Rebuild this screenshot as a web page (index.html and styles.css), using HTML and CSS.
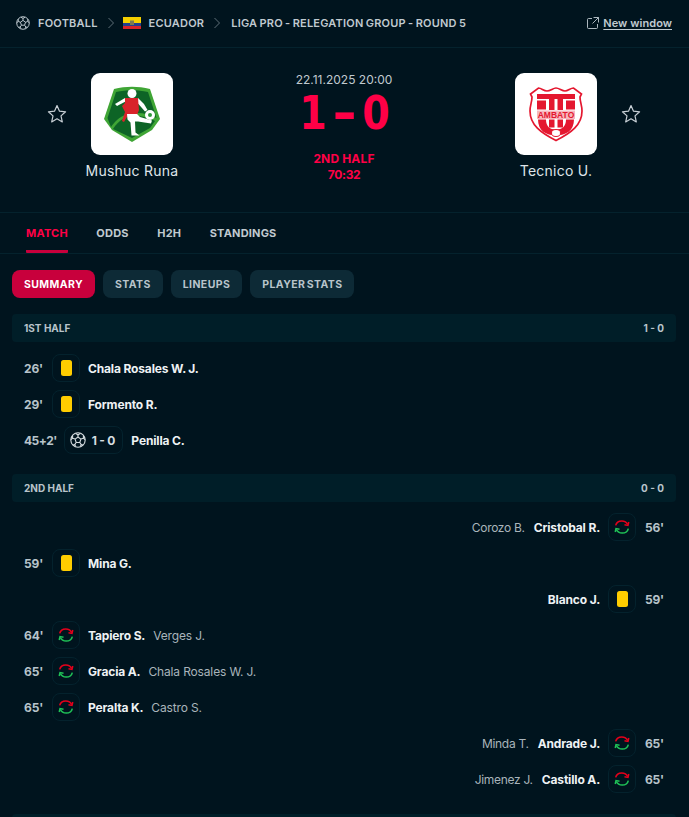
FILE: index.html
```html
<!DOCTYPE html>
<html lang="en">
<head>
<meta charset="utf-8">
<title>Mushuc Runa - Tecnico U.</title>
<link rel="stylesheet" href="styles.css">
</head>
<body>
<svg class="defs" width="0" height="0" aria-hidden="true">
  <defs>
    <symbol id="ball" viewBox="0 0 16 16">
      <g fill="none" stroke="currentColor" stroke-width="1.100">
        <circle cx="8" cy="8" r="7.200"/>
        <path d="M8 5l2.900 2.100-1.100 3.400H6.200L5.100 7.100zM8 5V2.800M10.900 7.100l2.500-.8M9.800 10.500l1.500 2.100M6.200 10.500l-1.500 2.100M5.100 7.100l-2.500-.8"/>
        <path d="M5.600 1.400L8 2.800l2.400-1.400M13.400 3.600v2.700l1.700 1.400M2.600 3.600v2.700L.9 7.700M2.900 13l1.800-.4 1 2M13.100 13l-1.800-.4-1 2"/>
      </g>
    </symbol>
    <symbol id="star" viewBox="0 0 20 20">
      <path d="M10 1.600l2.500 5.600 6.100.6-4.600 4.100 1.300 6-5.300-3.100-5.300 3.100 1.300-6L1.400 7.800l6.100-.6z" fill="none" stroke="currentColor" stroke-width="1.200" stroke-linejoin="round"/>
    </symbol>
    <symbol id="chev" viewBox="0 0 8 12">
      <path d="M1.500 1l5 5-5 5" fill="none" stroke="currentColor" stroke-width="1"/>
    </symbol>
    <symbol id="sub" viewBox="0 0 16 16">
      <g fill="none" stroke-width="1.400">
        <path d="M2.400 6.600C3 4 5.200 2.600 7.800 2.600c2.300 0 4.300 1.200 5.200 3.200" stroke="#e4001b"/>
        <path d="M10.200 6l3.100.6.700-3" stroke="#e4001b"/>
        <path d="M13.600 9.400C13 12 10.800 13.400 8.200 13.400c-2.300 0-4.300-1.200-5.200-3.200" stroke="#1fc157"/>
        <path d="M5.800 10l-3.100-.6-.7 3" stroke="#1fc157"/>
      </g>
    </symbol>
  </defs>
</svg>

<header class="crumbs">
  <svg class="crumb-ball"><use href="#ball"/></svg>
  <span class="crumb">FOOTBALL</span>
  <svg class="chev"><use href="#chev"/></svg>
  <svg class="flag" viewBox="0 0 18 12">
    <rect width="18" height="6" fill="#f5d000"/>
    <rect y="6" width="18" height="3" fill="#24408e"/>
    <rect y="9" width="18" height="3" fill="#d8232a"/>
    <rect x="7" y="3.500" width="4" height="4.500" fill="#7d7a52"/>
  </svg>
  <span class="crumb">ECUADOR</span>
  <svg class="chev"><use href="#chev"/></svg>
  <span class="crumb">LIGA PRO - RELEGATION GROUP - ROUND 5</span>
  <a class="new-window">
    <svg class="nw-icon" viewBox="0 0 12 12"><path d="M5 1.500H1.500a1 1 0 0 0-1 1v8a1 1 0 0 0 1 1h8a1 1 0 0 0 1-1V7M6.500.5h5v5M11.500.5L5.500 6.500" fill="none" stroke="currentColor" stroke-width=".9"/></svg>
    <span class="nw-text">New window</span>
  </a>
</header>

<section class="match">
  <div class="side">
    <svg class="star"><use href="#star"/></svg>
    <div class="team">
      <div class="logo">
        <svg class="crest" viewBox="0 0 56 56">
          <path d="M10 3C22 0 34 0 46 3l10 30-8 11-20 12L8 44 0 33z" fill="#3fa535"/>
          <path d="M12 6C23 3.500 33 3.500 44 6l8.500 26C42 26 24 24 13 34c-3 3-5 5-6 7L3.500 32z" fill="#0d6426"/>
          <path d="M9 43c6-9 12-13 21-13s16 2 21 5l-5 7-18 10z" fill="#0d6426"/>
          <circle cx="28" cy="7.500" r="4.500" fill="#fff"/>
          <path d="M11 18l10-6 1.500 3-9.500 5z" fill="#fff"/>
          <path d="M34 12l6 6 3.500 6-2.500 1.500-7-8z" fill="#fff"/>
          <path d="M21 12h13l1 12-2 5H24l-4 7-2-1 3-9-3-6 3-3z" fill="#d8232a"/>
          <path d="M23 28h10l3 3 12 3.500-1 3-13-2-3 0 .5 11 4 3h-8l-1-13-3-3z" fill="#fff"/>
          <circle cx="46" cy="29" r="5" fill="#fff"/>
          <circle cx="46" cy="29" r="2" fill="#2d9a3a"/>
        </svg>
      </div>
      <div class="team-name">Mushuc Runa</div>
    </div>
  </div>
  <div class="result">
    <div class="kick">22.11.2025 20:00</div>
    <div class="score"><span class="digit">1</span><span class="dash">-</span><span class="digit">0</span></div>
    <div class="status">2ND HALF</div>
    <div class="status status-time">70:32</div>
  </div>
  <div class="side side-away">
    <div class="team">
      <div class="logo">
        <svg class="crest" viewBox="0 0 54 56">
          <path d="M27 54.500C12 47 1 39 1 25c0-6 2-9 2-14l-1.500-3 8-6c3 0 5 3 8.500 3S24 2 27 2s6 3 9 3 5.500-3 8.500-3l8 6-1.500 3c0 5 2 8 2 14 0 14-11 22-26 29.500z" fill="#fff" stroke="#e4172f" stroke-width="1.700"/>
          <path d="M8 8h38v5H8z" fill="#e4172f"/>
          <path d="M8 14.500h9v9H8zM37 14.500h9v9h-9zM20 13h5.500v11H20zM28.500 13H34v11h-5.500z" fill="#e4172f"/>
          <path d="M8 24.500h38V33H8z" fill="#f7b6bd"/>
          <path d="M9 33.500h8c0 7 4 10 10 10s10-3 10-10h8c0 11-8 16-18 16S9 44.500 9 33.500z" fill="#e4172f"/>
          <path d="M20 33.500h5.500v8H20zM28.500 33.500H34v8h-5.500z" fill="#e4172f"/>
          <text class="crest-text" x="27" y="31.500" text-anchor="middle">AMBATO</text>
          <ellipse cx="27" cy="47" rx="4.500" ry="3.500" fill="#fff" stroke="#e4172f" stroke-width="1"/>
        </svg>
      </div>
      <div class="team-name">Tecnico U.</div>
    </div>
    <svg class="star"><use href="#star"/></svg>
  </div>
</section>

<nav class="tabs">
  <a class="tab tab-active">MATCH</a>
  <a class="tab">ODDS</a>
  <a class="tab">H2H</a>
  <a class="tab">STANDINGS</a>
</nav>

<nav class="pills">
  <a class="pill pill-active">SUMMARY</a>
  <a class="pill">STATS</a>
  <a class="pill">LINEUPS</a>
  <a class="pill">PLAYER STATS</a>
</nav>

<main class="summary">
  <div class="period"><span>1ST HALF</span><span>1 - 0</span></div>
  <div class="events events-first">
    <div class="event"><span class="time">26'</span><span class="box"><i class="card"></i></span><b class="player">Chala Rosales W. J.</b></div>
    <div class="event"><span class="time">29'</span><span class="box"><i class="card"></i></span><b class="player">Formento R.</b></div>
    <div class="event"><span class="time time-wide">45+2'</span><span class="box box-goal"><svg class="goal-ball"><use href="#ball"/></svg><span class="goal-score">1 - 0</span></span><b class="player">Penilla C.</b></div>
  </div>
  <div class="period"><span>2ND HALF</span><span>0 - 0</span></div>
  <div class="events">
    <div class="event away"><span class="time">56'</span><span class="box"><svg class="sub"><use href="#sub"/></svg></span><b class="player">Cristobal R.</b><span class="off">Corozo B.</span></div>
    <div class="event"><span class="time">59'</span><span class="box"><i class="card"></i></span><b class="player">Mina G.</b></div>
    <div class="event away"><span class="time">59'</span><span class="box"><i class="card"></i></span><b class="player">Blanco J.</b></div>
    <div class="event"><span class="time">64'</span><span class="box"><svg class="sub"><use href="#sub"/></svg></span><b class="player">Tapiero S.</b><span class="off">Verges J.</span></div>
    <div class="event"><span class="time">65'</span><span class="box"><svg class="sub"><use href="#sub"/></svg></span><b class="player">Gracia A.</b><span class="off">Chala Rosales W. J.</span></div>
    <div class="event"><span class="time">65'</span><span class="box"><svg class="sub"><use href="#sub"/></svg></span><b class="player">Peralta K.</b><span class="off">Castro S.</span></div>
    <div class="event away"><span class="time">65'</span><span class="box"><svg class="sub"><use href="#sub"/></svg></span><b class="player">Andrade J.</b><span class="off">Minda T.</span></div>
    <div class="event away"><span class="time">65'</span><span class="box"><svg class="sub"><use href="#sub"/></svg></span><b class="player">Castillo A.</b><span class="off">Jimenez J.</span></div>
  </div>
  <div class="period"></div>
</main>
</body>
</html>
```
FILE: styles.css
```css
* { box-sizing: border-box; }
html, body { margin: 0; height: 100%; overflow: hidden; }
body {
  background: #00141e;
  color: #c8d0d6;
  font-family: Inter, "Liberation Sans", sans-serif;
  font-size: 12px;
}
.defs { position: absolute; }

.crumbs {
  display: flex;
  align-items: center;
  height: 48px;
  padding: 0 17px 2px 16px;
  border-bottom: 1px solid #04222d;
}
.crumb { font-size: 11px; font-weight: 600; letter-spacing: .2px; word-spacing: -.7px; color: #c0cad0; }
.crumb-ball { width: 14px; height: 14px; margin-right: 8px; color: #c0cad0; }
.chev { width: 8px; height: 12px; margin: 0 10px 0 9px; color: #5f6f78; }
.flag { width: 18px; height: 12px; margin: 0 8px 0 -2px; }
.new-window { margin-left: auto; display: flex; align-items: center; gap: 4px; color: #c0cad0; }
.nw-icon { width: 12px; height: 12px; }
.nw-text { font-size: 11px; font-weight: 600; text-decoration: underline; text-underline-offset: 2px; letter-spacing: .05px; }

.match {
  display: grid;
  grid-template-columns: 1fr 190px 1fr;
  height: 165px;
  padding: 25px 48px 0 47px;
  border-bottom: 1px solid #04222d;
}
.side { display: flex; gap: 17px; align-items: flex-start; }
.side-away { justify-content: flex-end; }
.star { width: 20px; height: 20px; margin-top: 31px; color: #c8d0d6; }
.team { display: flex; flex-direction: column; align-items: center; width: 96px; }
.logo {
  width: 82px; height: 82px;
  background: #fff;
  border-radius: 9px;
  display: flex; align-items: center; justify-content: center;
}
.crest { width: 56px; height: 56px; }
.crest-text { font: 700 8.500px "Liberation Sans", sans-serif; fill: #e4172f; }
.team-name { margin-top: 7px; font-size: 14px; line-height: 18px; letter-spacing: .25px; color: #dfe5e9; white-space: nowrap; }

.result { display: flex; flex-direction: column; align-items: center; }
.kick { font-size: 12px; line-height: 14px; color: #c0cad0; }
.score {
  display: flex;
  justify-content: center;
  gap: 9px;
  height: 60px;
  margin-top: 4px;
  font-family: "DejaVu Sans", sans-serif;
  font-weight: 700;
  font-size: 46px;
  line-height: 44px;
  color: #ff0046;
}
.digit { display: block; width: 32px; margin: 0 -3px; text-align: center; transform: scaleX(.86); }
.dash { display: block; width: 19px; text-align: center; transform: scaleX(1.3); }
.status { font-size: 12px; line-height: 16px; font-weight: 700; letter-spacing: .15px; color: #ff0046; }
.status-time { letter-spacing: -.3px; }

.tabs {
  display: flex;
  gap: 28.500px;
  height: 41px;
  padding: 0 26px;
  border-bottom: 1px solid #04222d;
}
.tab {
  font-size: 11px;
  font-weight: 700;
  letter-spacing: .2px;
  line-height: 40px;
  color: #c0cad0;
  height: 40px;
}
.tab-active { color: #ff0046; border-bottom: 3px solid #c8003c; border-radius: 0 0 1px 1px; }

.pills { display: flex; gap: 8px; padding: 16px 12px; }
.pill {
  height: 28px;
  line-height: 29px;
  padding: 0 12px;
  background: #0d2a36;
  border-radius: 8px;
  font-size: 10.500px;
  font-weight: 700;
  letter-spacing: .4px;
  word-spacing: -1.500px;
  color: #b8c4cb;
}
.pill-active { background: #c8003c; color: #fff; }

.summary { padding: 0 13px 0 12px; }
.period {
  display: flex;
  justify-content: space-between;
  align-items: center;
  height: 28px;
  padding: 0 12px 1px;
  background: #001e28;
  border-radius: 4px;
  font-size: 10px;
  font-weight: 700;
  color: #b8c4cb;
}
.events { padding: 7px 0 17px; }
.events-first { padding: 8px 0 16px; }
.event { display: flex; align-items: center; height: 36px; padding: 0 12px; font-size: 12px; letter-spacing: -.15px; }
.away { flex-direction: row-reverse; }
.time { font-weight: 700; color: #b8c4cb; margin-right: 8px; min-width: 20px; }
.time-wide { letter-spacing: -.5px; margin-right: 7px; }
.box {
  display: flex; align-items: center; justify-content: center;
  min-width: 28px; height: 28px;
  border: 1px solid #04222d;
  border-radius: 8px;
  margin-right: 8px;
}
.away .time { margin: 0 0 0 8px; text-align: right; }
.away .box { margin: 0; }
.box-goal { padding: 0 7px 0 5px; gap: 6px; }
.card { width: 11px; height: 16px; background: #ffcd00; border-radius: 2.500px; display: block; }
.sub { width: 18px; height: 18px; }
.goal-ball { width: 16px; height: 16px; color: #d6dde1; }
.goal-score { font-weight: 700; color: #d6dde1; letter-spacing: 0; word-spacing: -.5px; }
.player { font-weight: 700; color: #eef2f4; }
.off { margin-left: 8px; color: #a9b4bb; }
.away .player { margin-right: 8px; }
.away .off { margin: 0 9px 0 0; letter-spacing: -.3px; }
```
